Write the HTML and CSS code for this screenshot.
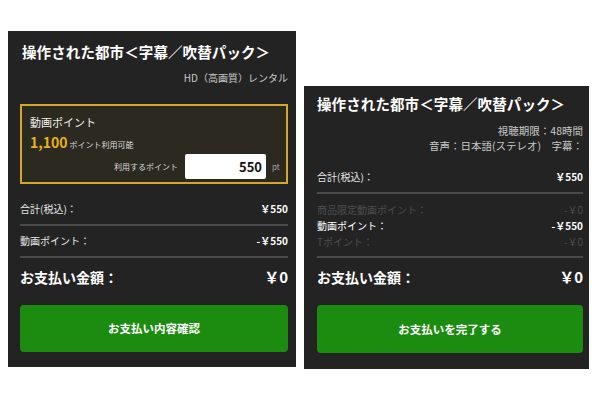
FILE: index.html
```html
<!DOCTYPE html>
<html lang="ja">
<head>
<meta charset="utf-8">
<link rel="stylesheet" href="styles.css">
</head>
<body>
<div class="stage">
  <section class="panel panel-left">
    <h1 class="title">操作された都市＜字幕／吹替パック＞</h1>
    <p class="sub">HD（高画質）レンタル</p>
    <div class="pointbox">
      <div class="pb-label">動画ポイント</div>
      <div class="pb-avail"><span class="pb-num">1,100</span><span class="pb-small">ポイント利用可能</span></div>
      <div class="pb-use">
        <span class="pb-small">利用するポイント</span>
        <span class="pb-input">550</span>
        <span class="pb-unit">pt</span>
      </div>
    </div>
    <div class="row row-first"><span>合計(税込)：</span><b>￥550</b></div>
    <div class="divider"></div>
    <div class="row"><span>動画ポイント：</span><b>-￥550</b></div>
    <div class="divider"></div>
    <div class="row total"><span>お支払い金額：</span><b>￥0</b></div>
    <button class="btn">お支払い内容確認</button>
  </section>

  <section class="panel panel-right">
    <h1 class="title">操作された都市＜字幕／吹替パック＞</h1>
    <p class="info info-first">視聴期限：48時間</p>
    <p class="info">音声：日本語(ステレオ)　字幕：</p>
    <div class="row row-first2"><span>合計(税込)：</span><b>￥550</b></div>
    <div class="divider"></div>
    <div class="mini-rows">
      <div class="mrow muted"><span>商品限定動画ポイント：</span><span>-￥0</span></div>
      <div class="mrow strong"><span>動画ポイント：</span><b>-￥550</b></div>
      <div class="mrow muted"><span>Tポイント：</span><span>-￥0</span></div>
    </div>
    <div class="divider"></div>
    <div class="row total"><span>お支払い金額：</span><b>￥0</b></div>
    <button class="btn">お支払いを完了する</button>
  </section>
</div>
</body>
</html>
```
FILE: styles.css
```css
* { box-sizing: border-box; margin: 0; padding: 0; }
html, body { background: #fff; }
body {
  font-family: "Noto Sans CJK JP", "Noto Sans", sans-serif;
  color: #fff;
}
.stage {
  position: relative;
  width: 600px;
  height: 400px;
  display: flex;
  align-items: flex-start;
  padding: 31px 0 0 8px;
  gap: 8px;
}
.panel {
  background: #232323;
  display: flex;
  flex-direction: column;
}
.panel-left {
  width: 288px;
  height: 336px;
  padding: 10px 8px 15px 12px;
}
.panel-right {
  width: 285px;
  height: 283px;
  margin-top: 55px;
  padding: 7px 6px 16px 13px;
}
.title {
  font-size: 14.5px;
  font-weight: 700;
  line-height: 22px;
  padding-left: 2px;
  white-space: nowrap;
  letter-spacing: 0.1px;
}
.panel-right .title { padding-left: 0; }
.sub {
  margin-top: 7px;
  font-size: 10px;
  line-height: 16px;
  color: #c8c8c8;
  text-align: right;
}
.pointbox {
  margin-top: 18px;
  height: 80px;
  border: 2px solid #d6a62a;
  background: #2c2920;
  padding: 8px 2px 6px 8px;
  display: flex;
  flex-direction: column;
}
.pb-label {
  font-size: 11px;
  line-height: 16px;
  color: #f0f0f0;
}
.pb-avail {
  margin-top: 4px;
  line-height: 16px;
  display: flex;
  align-items: baseline;
  gap: 2px;
}
.pb-num {
  font-size: 14px;
  font-weight: 700;
  color: #e9b11a;
}
.pb-small {
  font-size: 8px;
  color: #dcdcdc;
}
.pb-use {
  margin-top: 1px;
  display: flex;
  align-items: center;
  justify-content: flex-end;
}
.pb-input {
  margin-left: 7px;
  width: 81px;
  height: 25px;
  background: #fff;
  border-radius: 2px;
  color: #111;
  font-size: 13px;
  font-weight: 700;
  text-align: right;
  line-height: 25px;
  padding-right: 4px;
}
.pb-unit {
  margin-left: 6px;
  font-size: 8px;
  color: #aaa;
  width: 12px;
}
.row {
  display: flex;
  justify-content: space-between;
  align-items: center;
  font-size: 10px;
  line-height: 20px;
  padding: 5px 0;
  color: #e6e6e6;
}
.row b { color: #fff; font-weight: 700; }
.row-first { margin-top: 10px; }
.row-first2 { margin-top: 9px; }
.divider {
  height: 2px;
  background: #4a4a4a;
}
.row.total {
  font-size: 14px;
  line-height: 26px;
  padding: 6px 0 0;
}
.row.total span { font-weight: 700; color: #fff; }
.row.total b { font-size: 15px; }
.btn {
  margin-top: 15px;
  height: 48px;
  width: 100%;
  border: none;
  border-radius: 4px;
  background: #1c8c10;
  color: #fff;
  font-family: inherit;
  font-size: 11.5px;
  font-weight: 700;
}
.info {
  font-size: 10.5px;
  line-height: 15px;
  color: #c8c8c8;
  text-align: right;
}
.info-first { margin-top: 8px; }
.mini-rows {
  padding: 8px 0 6px;
}
.mrow {
  display: flex;
  justify-content: space-between;
  font-size: 10px;
  line-height: 16px;
}
.mrow.muted { color: #4d4d4d; }
.mrow.strong { color: #fff; }
.mrow b { font-weight: 700; }
```
